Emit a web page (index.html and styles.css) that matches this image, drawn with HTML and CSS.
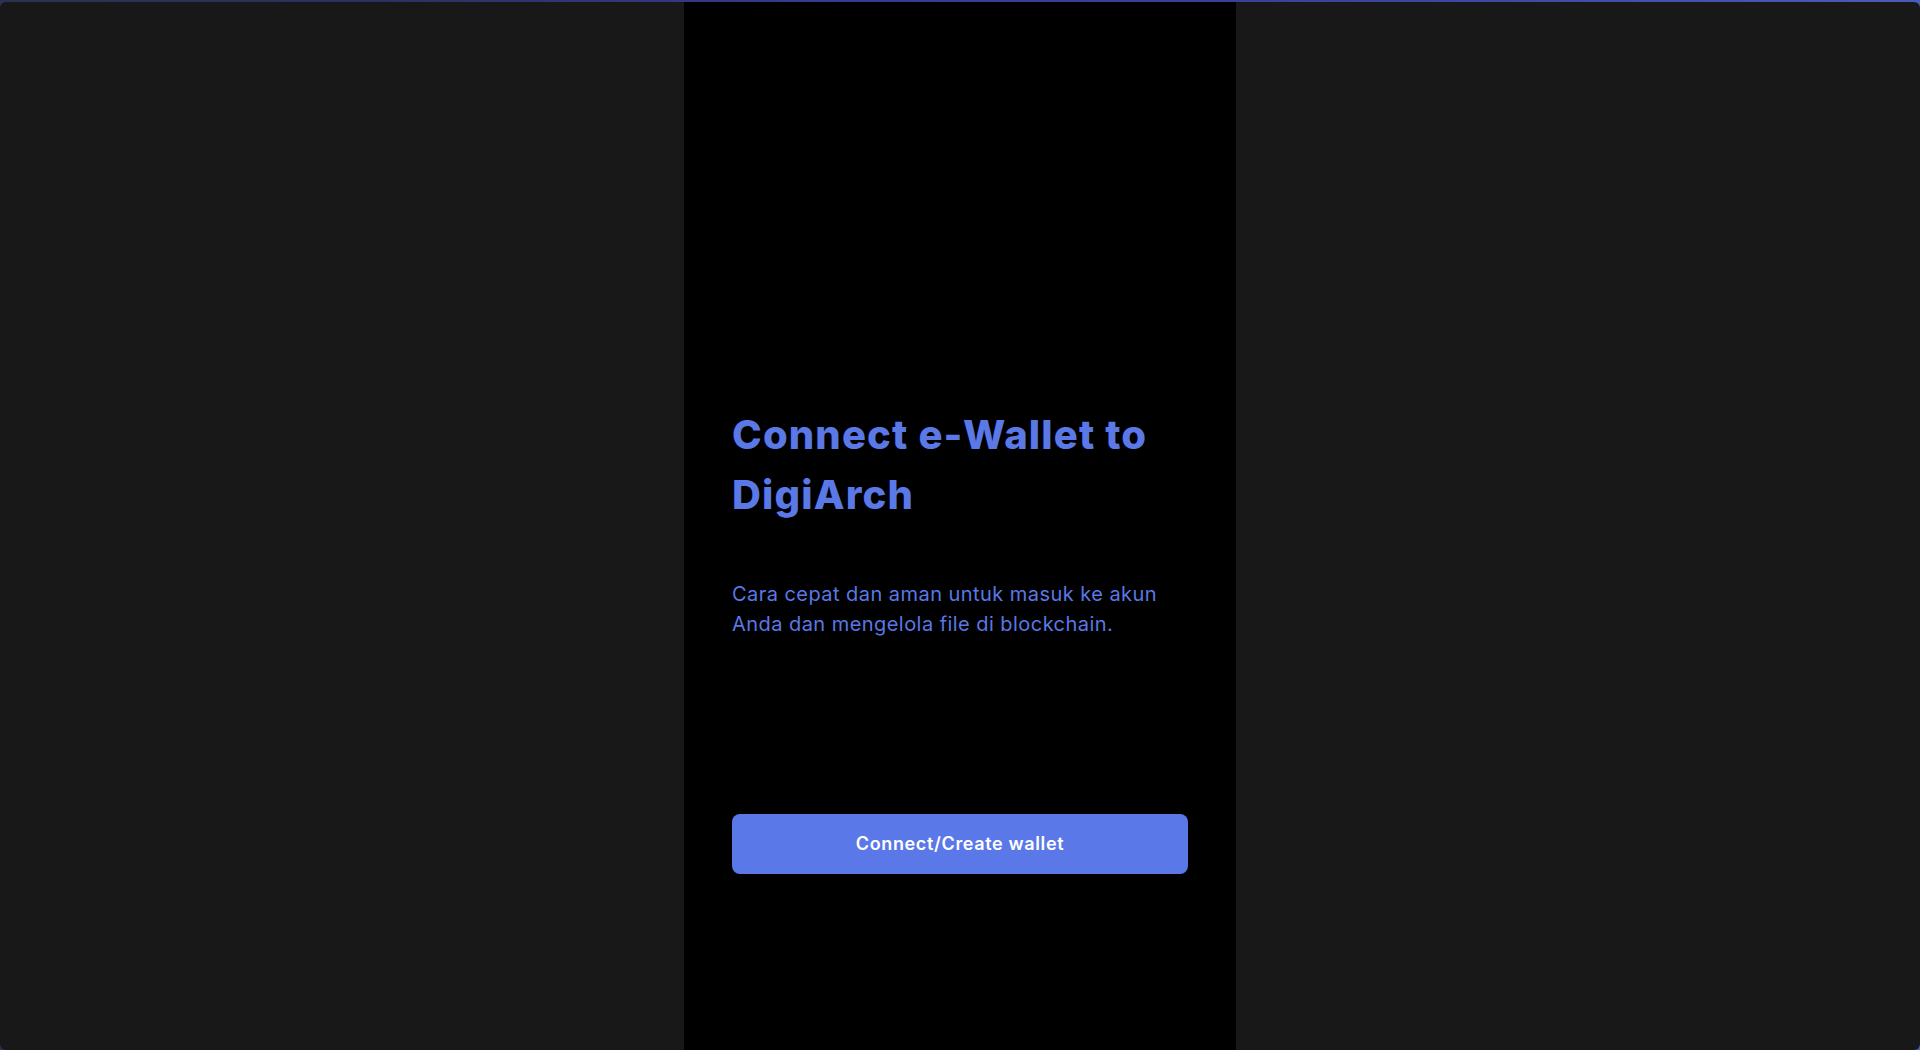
FILE: index.html
```html
<!DOCTYPE html>
<html lang="id">
<head>
<meta charset="utf-8">
<title>Connect e-Wallet to DigiArch</title>
<link rel="stylesheet" href="styles.css">
</head>
<body>
<div class="window">
  <main class="panel">
    <h1 class="title">Connect e-Wallet to DigiArch</h1>
    <p class="lead">Cara cepat dan aman untuk masuk ke akun Anda dan mengelola file di blockchain.</p>
    <button class="cta" type="button">Connect/Create wallet</button>
  </main>
</div>
</body>
</html>
```

FILE: styles.css
```css
html, body {
  margin: 0;
  padding: 0;
  height: 100%;
}

body {
  background: linear-gradient(90deg, #2a3152 0%, #2c3160 20%, #363c96 45%, #3b42a0 70%, #4a5cb8 100%);
  font-family: "Inter", "Noto Sans", sans-serif;
  overflow: hidden;
}

.window {
  margin-top: 2px;
  height: 1048px;
  background: #181818;
  border-radius: 6px;
  display: flex;
  justify-content: center;
}

.panel {
  width: 552px;
  box-sizing: border-box;
  background: #000000;
  padding: 403px 48px 0;
  display: flex;
  flex-direction: column;
}

.title {
  margin: 0;
  font-size: 40px;
  line-height: 60px;
  font-weight: 800;
  letter-spacing: 1.15px;
  color: #5a78e6;
}

.lead {
  margin: 54px 0 0;
  font-size: 20px;
  line-height: 30px;
  font-weight: 400;
  letter-spacing: 0.45px;
  color: #5a78e6;
}

.cta {
  margin-top: 175px;
  height: 60px;
  width: 100%;
  border: none;
  border-radius: 8px;
  background: #5b78e9;
  color: #ffffff;
  font-family: "Inter", "Noto Sans", sans-serif;
  font-size: 18px;
  font-weight: 600;
  letter-spacing: 0.65px;
  line-height: 58px;
  padding: 1px 0;
  cursor: pointer;
}
```
